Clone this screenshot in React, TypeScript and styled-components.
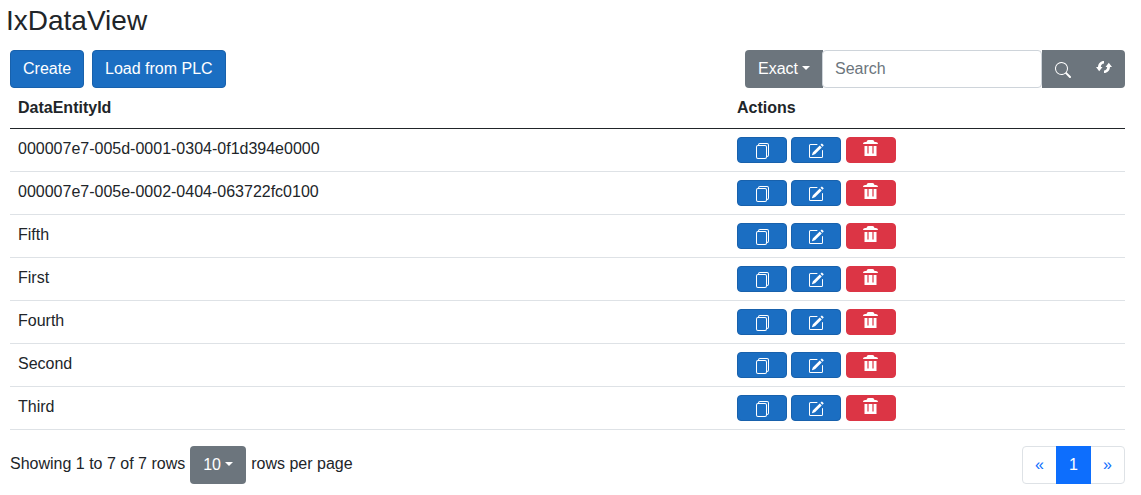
import React from 'react';
import styled, { createGlobalStyle } from 'styled-components';
import { BsFiles, BsPencilSquare, BsSearch } from 'react-icons/bs';

const GlobalStyle = createGlobalStyle`
  *, *::before, *::after { box-sizing: border-box; }
  body {
    margin: 0;
    background: #fff;
    color: #212529;
    font: 400 16px/24px "Liberation Sans", Arial, sans-serif;
  }
  button, input, select { font: inherit; margin: 0; }
`;

const Page = styled.main`
  padding: 4px 16px 11px 10px;
`;

const Title = styled.h1`
  margin: 0 0 12px -4px;
  font-size: 28px;
  font-weight: 400;
  line-height: 34px;
`;

const Bar = styled.div`
  display: flex;
  justify-content: space-between;
  align-items: center;
`;

const ButtonRow = styled.div`
  display: flex;
  gap: 8px;
`;

const Button = styled.button`
  height: 38px;
  padding: 0 12px;
  border: 1px solid #1861ac;
  border-radius: 4px;
  background: #1b6ec2;
  color: #fff;
  cursor: pointer;
`;

const SearchGroup = styled.form`
  display: flex;
  width: 380px;
`;

const SelectBox = styled.span<{ $width: number; $grouped?: boolean }>`
  display: grid;
  align-items: center;
  width: ${p => p.$width}px;
  height: 38px;
  border-radius: ${p => (p.$grouped ? '4px 0 0 4px' : '4px')};
  background: #6c757d;
  color: #fff;

  > * { grid-area: 1 / 1; }
  > svg {
    justify-self: end;
    margin: 0 13px 2px 0;
    pointer-events: none;
  }
`;

const Select = styled.select`
  appearance: none;
  width: 100%;
  height: 38px;
  padding: 0 13px;
  border: 0;
  border-radius: inherit;
  background: transparent;
  color: inherit;
  cursor: pointer;

  option { color: #212529; }
`;

const SearchInput = styled.input`
  flex: 1;
  min-width: 0;
  height: 38px;
  margin-left: -1px;
  padding: 0 12px;
  border: 1px solid #ced4da;
  border-radius: 4px;
  color: #212529;

  &::placeholder { color: #6c757d; opacity: 1; }
`;

const IconButton = styled.button<{ $last?: boolean }>`
  display: flex;
  justify-content: center;
  align-items: center;
  width: ${p => (p.$last ? 42 : 41)}px;
  height: 38px;
  padding: ${p => (p.$last ? '0 0 4px' : '2px 0 0')};
  border: 0;
  border-radius: ${p => (p.$last ? '0 4px 4px 0' : '0')};
  background: #6c757d;
  color: #fff;
  cursor: pointer;
`;

const Table = styled.table`
  width: 100%;
  table-layout: fixed;
  border-collapse: separate;
  border-spacing: 0;
  margin-bottom: 16px;
`;

const HeadCell = styled.th<{ $width?: string }>`
  width: ${p => p.$width ?? 'auto'};
  height: 41px;
  padding: 8px;
  border-bottom: 1px solid #212529;
  text-align: left;
  font-weight: 700;
`;

const Cell = styled.td`
  height: 43px;
  padding: 8px;
  border-bottom: 1px solid #dee2e6;
  vertical-align: top;
`;

const ActionButton = styled.button<{ $danger?: boolean }>`
  display: inline-flex;
  justify-content: center;
  align-items: center;
  width: 50px;
  height: 26px;
  padding: ${p => (p.$danger ? '0 0 4px' : '2px 0 0')};
  border: 1px solid ${p => (p.$danger ? '#dc3545' : '#1861ac')};
  border-radius: 4px;
  background: ${p => (p.$danger ? '#dc3545' : '#1b6ec2')};
  color: #fff;
  vertical-align: top;
  cursor: pointer;
`;

const PageSize = styled.div`
  display: flex;
  align-items: center;
  gap: 5px;
`;

const FooterText = styled.span`
  height: 26px;
`;

const Pager = styled.nav`
  display: flex;
`;

const PageLink = styled.a<{ $active?: boolean }>`
  width: 35px;
  height: 38px;
  margin-left: -1px;
  border: 1px solid ${p => (p.$active ? '#0d6efd' : '#dee2e6')};
  background: ${p => (p.$active ? '#0d6efd' : '#fff')};
  color: ${p => (p.$active ? '#fff' : '#0d6efd')};
  line-height: 36px;
  text-align: center;
  text-decoration: none;

  ${p => p.$active && 'z-index: 1;'}
  &:first-child { border-radius: 4px 0 0 4px; }
  &:last-child { border-radius: 0 4px 4px 0; }
`;

const Caret = () => (
  <svg width="8" height="4" viewBox="0 0 8 4" fill="currentColor" aria-hidden="true">
    <path d="M0 0h8L4 4z" />
  </svg>
);

const TrashIcon = () => (
  <svg width="16" height="16" viewBox="0 0 16 16" fill="currentColor" aria-hidden="true">
    <path d="M0 4C0 2.8 1 2 2.2 2H3.5C3.8 .8 4.5 0 5.5 0h4c1 0 1.7 .8 2 2h1.3C14 2 15 2.8 15 4z" />
    <path d="M1.5 6h2.9v7.5h1.2V6h3.8v7.5h1.2V6h2.9v10h-12z" />
  </svg>
);

const RefreshIcon = () => (
  <svg width="16" height="16" viewBox="0 0 16 16" fill="currentColor" aria-hidden="true">
    <path d="M8 2C4.600 2 2.200 4.500 2 8H0l3.200 4.200L6.500 8H4.800C5 6 6.200 4.600 8 4.500z" />
    <path d="M12.800 3.800L9.500 8h1.700C11 10 9.800 11.400 8 11.500V14c3.400 0 5.800-2.500 6-6h2z" />
  </svg>
);

const entities = [
  '000007e7-005d-0001-0304-0f1d394e0000',
  '000007e7-005e-0002-0404-063722fc0100',
  'Fifth',
  'First',
  'Fourth',
  'Second',
  'Third',
];

export default function App() {
  return (
    <>
      <GlobalStyle />
      <Page>
        <Title>IxDataView</Title>
        <Bar>
          <ButtonRow>
            <Button type="button">Create</Button>
            <Button type="button">Load from PLC</Button>
          </ButtonRow>
          <SearchGroup onSubmit={e => e.preventDefault()}>
            <SelectBox $width={78} $grouped>
              <Select aria-label="Search mode" defaultValue="Exact">
                <option>Exact</option>
              </Select>
              <Caret />
            </SelectBox>
            <SearchInput type="text" placeholder="Search" aria-label="Search" />
            <IconButton type="submit" aria-label="Run search">
              <BsSearch size={16} />
            </IconButton>
            <IconButton type="button" aria-label="Refresh" $last>
              <RefreshIcon />
            </IconButton>
          </SearchGroup>
        </Bar>
        <Table>
          <thead>
            <tr>
              <HeadCell scope="col">DataEntityId</HeadCell>
              <HeadCell scope="col" $width="396px">Actions</HeadCell>
            </tr>
          </thead>
          <tbody>
            {entities.map(id => (
              <tr key={id}>
                <Cell>{id}</Cell>
                <Cell>
                  <ActionButton type="button" aria-label={`Copy ${id}`}>
                    <BsFiles size={16} />
                  </ActionButton>{' '}
                  <ActionButton type="button" aria-label={`Edit ${id}`}>
                    <BsPencilSquare size={16} />
                  </ActionButton>{' '}
                  <ActionButton type="button" aria-label={`Delete ${id}`} $danger>
                    <TrashIcon />
                  </ActionButton>
                </Cell>
              </tr>
            ))}
          </tbody>
        </Table>
        <Bar>
          <PageSize>
            <FooterText>Showing 1 to 7 of 7 rows</FooterText>
            <SelectBox $width={56}>
              <Select aria-label="Rows per page" defaultValue="10">
                <option>10</option>
              </Select>
              <Caret />
            </SelectBox>
            <FooterText>rows per page</FooterText>
          </PageSize>
          <Pager aria-label="Pages">
            <PageLink href="#previous" aria-label="Previous page">«</PageLink>
            <PageLink href="#1" aria-current="page" $active>1</PageLink>
            <PageLink href="#next" aria-label="Next page">»</PageLink>
          </Pager>
        </Bar>
      </Page>
    </>
  );
}
